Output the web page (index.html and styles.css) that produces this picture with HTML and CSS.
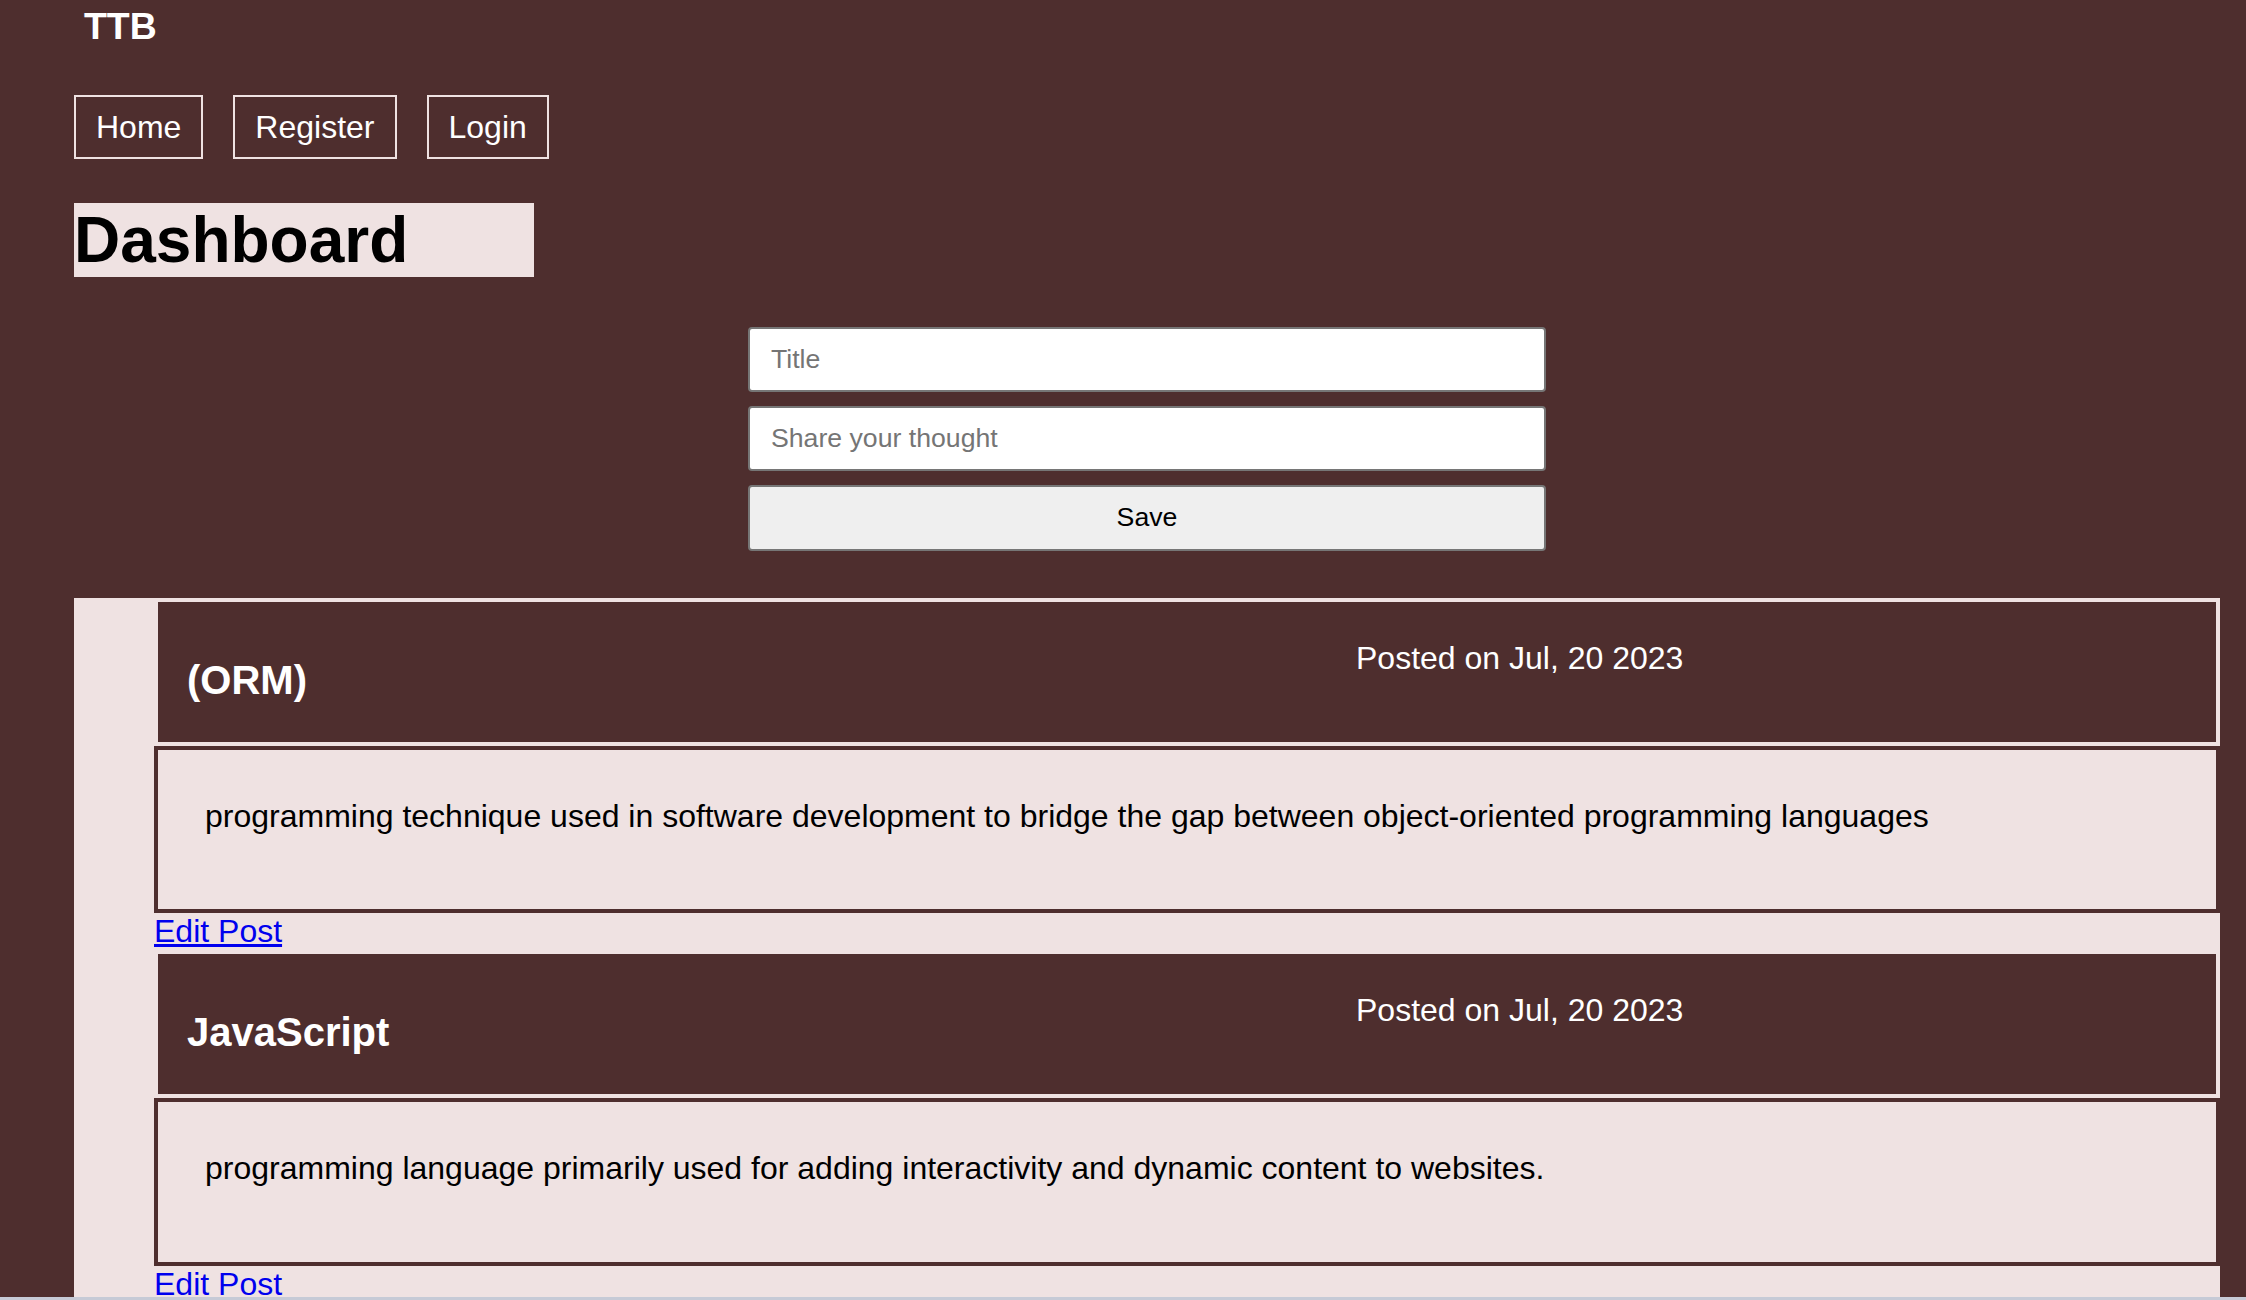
FILE: index.html
```html
<!DOCTYPE html>
<html lang="en">
<head>
<meta charset="utf-8">
<title>TTB - Dashboard</title>
<link rel="stylesheet" href="styles.css">
</head>
<body>
<div class="page">
  <header class="site-header">
    <h3 class="brand">TTB</h3>
    <nav class="nav">
      <a class="nav-link" href="#">Home</a>
      <a class="nav-link" href="#">Register</a>
      <a class="nav-link" href="#">Login</a>
    </nav>
  </header>

  <h1 class="page-title">Dashboard</h1>

  <form class="post-form">
    <input class="field" type="text" placeholder="Title">
    <input class="field" type="text" placeholder="Share your thought">
    <button class="save-btn" type="button">Save</button>
  </form>

  <ul class="posts">
    <li class="post">
      <div class="post-head">
        <h3 class="post-title">(ORM)</h3>
        <p class="post-date">Posted on Jul, 20 2023</p>
      </div>
      <div class="post-body">
        <p class="post-text">programming technique used in software development to bridge the gap between object-oriented programming languages</p>
      </div>
      <a class="edit-link" href="#">Edit Post</a>
    </li>
    <li class="post">
      <div class="post-head">
        <h3 class="post-title">JavaScript</h3>
        <p class="post-date">Posted on Jul, 20 2023</p>
      </div>
      <div class="post-body">
        <p class="post-text">programming language primarily used for adding interactivity and dynamic content to websites.</p>
      </div>
      <a class="edit-link" href="#">Edit Post</a>
    </li>
  </ul>
</div>
<div class="window-edge"></div>
</body>
</html>
```

FILE: styles.css
```css
* {
  box-sizing: border-box;
}

html, body {
  margin: 0;
  padding: 0;
}

body {
  background: #4e2e2e;
  font-family: "Liberation Sans", Arial, sans-serif;
  font-size: 32px;
  line-height: normal;
  overflow: hidden;
}

.page {
  padding: 0 26px 0 74px;
}

.site-header {
  display: flex;
  flex-direction: column;
  align-items: flex-start;
}

.brand {
  margin: 5px 0 0 10px;
  font-size: 37.44px;
  line-height: 43px;
  font-weight: bold;
  color: #ffffff;
}

.nav {
  display: flex;
  gap: 30px;
  margin-top: 47px;
}

.nav-link {
  display: block;
  padding: 11.6px 20px;
  border: 2px solid #efe2e2;
  color: #ffffff;
  text-decoration: none;
  font-size: 32px;
  line-height: 36.8px;
}

.page-title {
  width: 460px;
  margin: 44px 0 0;
  background: #efe2e2;
  color: #000000;
  font-size: 64px;
  line-height: 74px;
  font-weight: bold;
}

.post-form {
  width: 798px;
  margin: 50px auto 0;
  display: flex;
  flex-direction: column;
  gap: 14px;
}

.field {
  width: 100%;
  height: 65px;
  margin: 0;
  padding: 0 21px;
  background: #ffffff;
  border: 2px solid #767676;
  border-radius: 4px;
  font-family: "Liberation Sans", Arial, sans-serif;
  font-size: 26.67px;
  color: #000000;
}

.field::placeholder {
  color: #757575;
}

.save-btn {
  width: 100%;
  height: 65.7px;
  margin: 0;
  padding: 0;
  background: #efefef;
  border: 2px solid #767676;
  border-radius: 4px;
  font-family: "Liberation Sans", Arial, sans-serif;
  font-size: 26.67px;
  color: #000000;
}

.posts {
  list-style: none;
  margin: 47px 0 0;
  padding: 0 0 0 80px;
  background: #efe2e2;
}

.post {
  display: block;
}

.post-head {
  display: flex;
  align-items: flex-start;
  padding-left: 29px;
  background: #4e2e2e;
  border: 4px solid #efe2e2;
}

.post-title {
  flex: 0 0 1169px;
  margin: 55px 0 39px;
  font-size: 40px;
  line-height: 46px;
  font-weight: bold;
  color: #ffffff;
}

.post-date {
  margin: 38px 0 0;
  font-size: 32px;
  line-height: 36.8px;
  color: #ffffff;
}

.post-body {
  padding: 48px 47px 75px;
  border: 4px solid #4e2e2e;
  background: #efe2e2;
}

.post-text {
  margin: 0;
  font-size: 32px;
  line-height: 36.8px;
  color: #000000;
}

.edit-link {
  display: block;
  width: max-content;
  font-size: 32px;
  line-height: 36.8px;
  color: #0000ee;
  text-decoration: underline;
}

.window-edge {
  position: fixed;
  left: 0;
  right: 0;
  bottom: 0;
  height: 3px;
  background: #c6cad6;
}
```
